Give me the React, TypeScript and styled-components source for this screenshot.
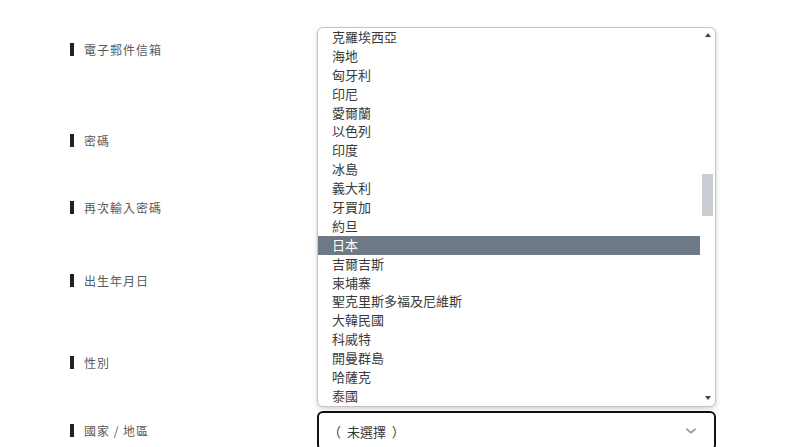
import styled, { createGlobalStyle } from "styled-components";

const GlobalStyle = createGlobalStyle`
  html, body {
    margin: 0;
    padding: 0;
    background: #fff;
  }
  body {
    font-family: "Noto Sans CJK TC", "Noto Sans", sans-serif;
  }
`;

const Form = styled.form`
  padding: 39px 0 0 70px;
  width: 646px;
`;

const Row = styled.div<{ $h: number }>`
  display: grid;
  grid-template-columns: 247px 399px;
  height: ${(p) => p.$h}px;
`;

const Label = styled.div`
  display: flex;
  align-items: center;
  gap: 10px;
  height: 20px;
  font-size: 12px;
  letter-spacing: 1px;
  color: #5a5a5a;
  &::before {
    content: "";
    width: 4px;
    height: 13px;
    background: #222;
  }
`;

const Field = styled.div`
  position: relative;
  margin-top: -9px;
`;

const Input = styled.div`
  height: 38px;
  border: 1px solid #ccc;
  border-radius: 6px;
  box-sizing: border-box;
`;

const Select = styled.div`
  display: flex;
  align-items: center;
  justify-content: space-between;
  height: 40px;
  padding: 0 16px 0 9px;
  box-sizing: border-box;
  border: 2px solid #111;
  border-radius: 6px;
  font-size: 13px;
  color: #3a3a3a;
  word-spacing: 3px;
`;

const Listbox = styled.div`
  position: absolute;
  left: 0;
  right: 0;
  bottom: calc(100% + 4px);
  height: 380px;
  display: flex;
  background: #fff;
  border: 1px solid #c4c4c4;
  border-radius: 6px;
  box-shadow: 0 2px 5px rgba(0, 0, 0, 0.18);
  box-sizing: border-box;
  overflow: hidden;
  z-index: 2;
`;

const Options = styled.ul`
  flex: 1;
  list-style: none;
  margin: 0;
  padding: 0;
`;

const Option = styled.li<{ $active?: boolean }>`
  height: 18.9px;
  line-height: 18.9px;
  padding-left: 14px;
  font-size: 13px;
  white-space: nowrap;
  color: ${(p) => (p.$active ? "#fff" : "#3a3a3a")};
  background: ${(p) => (p.$active ? "#6d7a86" : "transparent")};
`;

const Track = styled.div`
  width: 15px;
  display: flex;
  flex-direction: column;
  align-items: center;
`;

const Arrow = styled.div<{ $down?: boolean }>`
  width: 0;
  height: 0;
  margin: ${(p) => (p.$down ? "auto 0 6px" : "5px 0 0")};
  border-left: 3.5px solid transparent;
  border-right: 3.5px solid transparent;
  ${(p) =>
    p.$down
      ? "border-top: 4px solid #444;"
      : "border-bottom: 4px solid #444;"}
`;

const Thumb = styled.div`
  width: 11px;
  height: 42px;
  background: #c9cdd1;
`;

const Chevron = styled.svg`
  width: 14px;
  height: 14px;
  color: #a0a0a0;
`;

const countries = [
  "克羅埃西亞",
  "海地",
  "匈牙利",
  "印尼",
  "愛爾蘭",
  "以色列",
  "印度",
  "冰島",
  "義大利",
  "牙買加",
  "約旦",
  "日本",
  "吉爾吉斯",
  "柬埔寨",
  "聖克里斯多福及尼維斯",
  "大韓民國",
  "科威特",
  "開曼群島",
  "哈薩克",
  "泰國",
];

const rows = [
  { label: "電子郵件信箱", h: 91 },
  { label: "密碼", h: 67 },
  { label: "再次輸入密碼", h: 73 },
  { label: "出生年月日", h: 82 },
  { label: "性別", h: 68 },
];

export default function App() {
  const thumbTop = 137;
  return (
    <>
      <GlobalStyle />
      <Form>
        {rows.map((r) => (
          <Row key={r.label} $h={r.h}>
            <Label>{r.label}</Label>
            <Field>
              <Input />
            </Field>
          </Row>
        ))}
        <Row $h={40}>
          <Label>國家 / 地區</Label>
          <Field>
            <Listbox>
              <Options>
                {countries.map((c) => (
                  <Option key={c} $active={c === "日本"}>
                    {c}
                  </Option>
                ))}
              </Options>
              <Track>
                <Arrow />
                <Thumb style={{ marginTop: thumbTop }} />
                <Arrow $down />
              </Track>
            </Listbox>
            <Select>
              <span>（ 未選擇 ）</span>
              <Chevron viewBox="0 0 24 24" fill="none" stroke="currentColor" strokeWidth="3" strokeLinecap="round" strokeLinejoin="round">
                <path d="M5 9l7 6 7-6" />
              </Chevron>
            </Select>
          </Field>
        </Row>
      </Form>
    </>
  );
}
